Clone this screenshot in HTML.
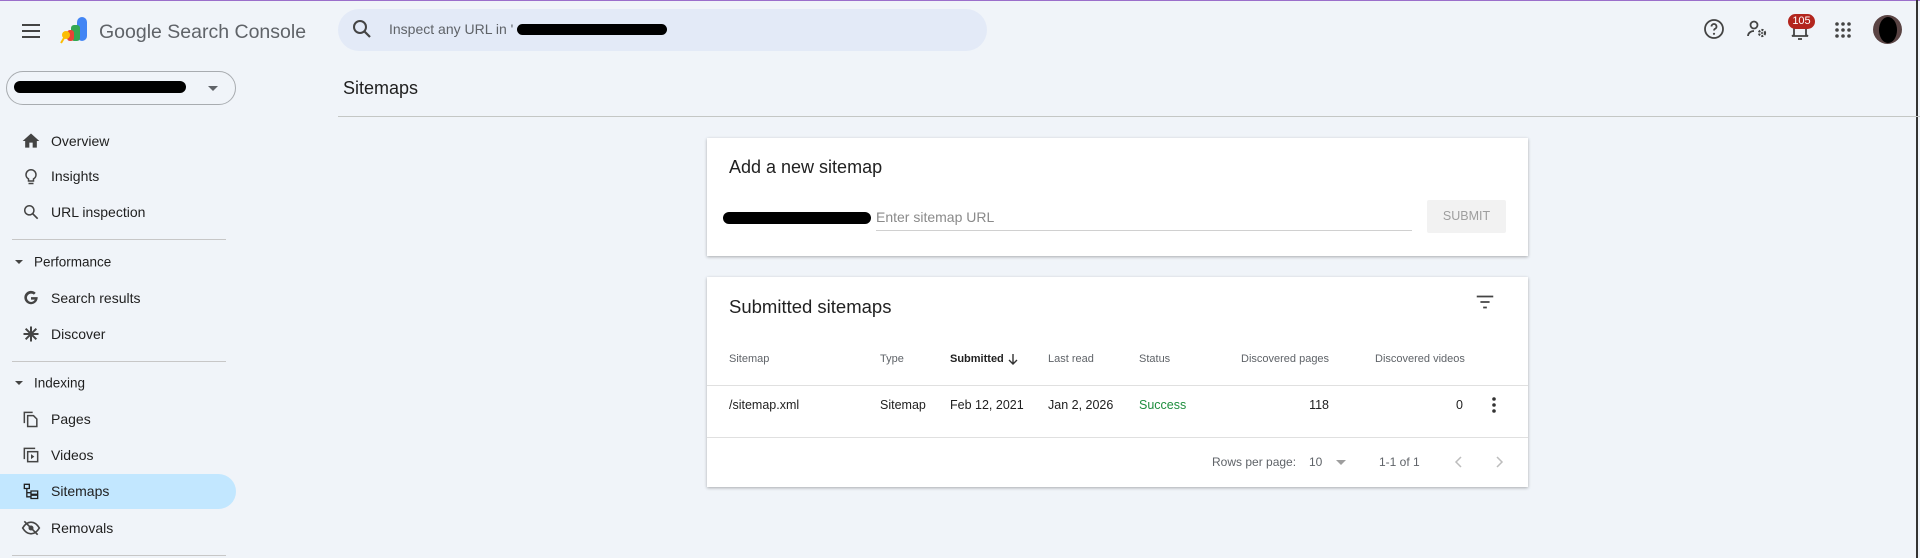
<!DOCTYPE html>
<html><head><meta charset="utf-8"><style>
*{box-sizing:border-box;margin:0;padding:0}
body{width:1920px;height:558px;overflow:hidden;background:#f0f4f9;font-family:"Liberation Sans",Arial,sans-serif;color:#1f1f1f;position:relative}
.a{position:absolute}
.nav{position:absolute;left:51px;font-size:14px;color:#1f1f1f;transform:translateY(-50%)}
.ic{position:absolute;left:21px;width:20px;height:20px;transform:translateY(-50%)}
.div{position:absolute;left:12px;width:214px;height:1px;background:#c7c7c7}
.card{position:absolute;left:707px;width:821px;background:#fff;box-shadow:0 1px 3px rgba(0,0,0,.3)}
.th{position:absolute;top:359px;font-size:11px;color:#5f6368;transform:translateY(-50%)}
.td{position:absolute;top:405px;font-size:12.5px;color:#212121;transform:translateY(-50%)}
</style></head><body>
<div class="a" style="left:0;top:0;width:1920px;height:1px;background:#9b6fcb"></div>
<div class="a" style="left:1916px;top:0;width:2px;height:558px;background:#333"></div>
<!-- header -->
<svg class="a" style="left:19px;top:19px" width="24" height="24" viewBox="0 0 24 24"><path d="M3 6h18M3 12h18M3 18h18" stroke="#444" stroke-width="2"/></svg>
<svg class="a" style="left:60px;top:16px" width="30" height="28" viewBox="0 0 30 28"><rect x="17" y="1" width="10" height="24" rx="5" fill="#4285f4"/><rect x="11" y="9" width="9" height="16" rx="3" fill="#34a853"/><rect x="7" y="14" width="7" height="11" rx="3" fill="#ea4335"/><circle cx="6" cy="19" r="4" fill="#fbbc04"/><path d="M4 22l-3 5" stroke="#fbbc04" stroke-width="2"/></svg>
<div class="a" style="left:99px;top:21px;font-size:19.5px;color:#5f6368">Google Search Console</div>
<div class="a" style="left:338px;top:9px;width:649px;height:42px;border-radius:21px;background:#e3eaf7"></div>
<svg class="a" style="left:350px;top:17px" width="24" height="24" viewBox="0 0 24 24"><circle cx="10" cy="10" r="6" fill="none" stroke="#444" stroke-width="2"/><path d="M14.5 14.5l5.5 5.5" stroke="#444" stroke-width="2.2"/></svg>
<div class="a" style="left:389px;top:21px;font-size:14px;color:#5f6368">Inspect any URL in '</div>
<div class="a" style="left:517px;top:24px;width:150px;height:11px;background:#000;border-radius:6px"></div>
<svg class="a" style="left:1702px;top:17px" width="24" height="24" viewBox="0 0 24 24"><circle cx="12" cy="12" r="9" fill="none" stroke="#444" stroke-width="1.8"/><path d="M9.5 9.5a2.5 2.5 0 1 1 3.5 2.3c-.7.4-1 .9-1 1.7" fill="none" stroke="#444" stroke-width="1.8"/><circle cx="12" cy="16.8" r="1.1" fill="#444"/></svg>
<svg class="a" style="left:1745px;top:17px" width="24" height="24" viewBox="0 0 24 24"><circle cx="9" cy="8" r="3.5" fill="none" stroke="#444" stroke-width="1.8"/><path d="M3 19c0-3 3-5 6-5" fill="none" stroke="#444" stroke-width="1.8"/><circle cx="17" cy="16" r="3" fill="none" stroke="#444" stroke-width="2.2" stroke-dasharray="2 1.3"/><circle cx="17" cy="16" r="1" fill="#444"/></svg>
<svg class="a" style="left:1788px;top:18px" width="24" height="24" viewBox="0 0 24 24"><path d="M6 17v-6a6 6 0 0 1 12 0v6l2 1H4z" fill="none" stroke="#444" stroke-width="1.8"/><path d="M10 21h4" stroke="#444" stroke-width="1.8"/></svg>
<div class="a" style="left:1788px;top:14px;width:27px;height:15px;border-radius:8px;background:#b3261e;color:#fff;font-size:11px;text-align:center;line-height:15px">105</div>
<svg class="a" style="left:1831px;top:18px" width="24" height="24" viewBox="0 0 24 24" fill="#444"><circle cx="6" cy="6" r="1.8"/><circle cx="12" cy="6" r="1.8"/><circle cx="18" cy="6" r="1.8"/><circle cx="6" cy="12" r="1.8"/><circle cx="12" cy="12" r="1.8"/><circle cx="18" cy="12" r="1.8"/><circle cx="6" cy="18" r="1.8"/><circle cx="12" cy="18" r="1.8"/><circle cx="18" cy="18" r="1.8"/></svg>
<div class="a" style="left:1873px;top:15px;width:29px;height:29px;border-radius:50%;background:#5a4444"></div>
<div class="a" style="left:1879px;top:17px;width:18px;height:26px;border-radius:50%;background:#000"></div>
<!-- sidebar -->
<div class="a" style="left:6px;top:71px;width:230px;height:34px;border:1px solid #a8acb0;border-radius:17px"></div>
<div class="a" style="left:14px;top:81px;width:172px;height:12px;background:#000;border-radius:6px"></div>
<div class="a" style="left:208px;top:86px;border:5px solid transparent;border-top-color:#5f6368"></div>
<svg class="ic" style="top:141px" viewBox="0 0 24 24"><path d="M10 20v-6h4v6h5v-8h3L12 3 2 12h3v8z" fill="#444"/></svg>
<div class="nav" style="top:141px">Overview</div>
<svg class="ic" style="top:176px" viewBox="0 0 24 24"><path d="M9 21h6M9 18h6v-2.5c2-1.2 3-3 3-5a6 6 0 0 0-12 0c0 2 1 3.8 3 5z" fill="none" stroke="#444" stroke-width="1.8"/></svg>
<div class="nav" style="top:176px">Insights</div>
<svg class="ic" style="top:212px" viewBox="0 0 24 24"><circle cx="10" cy="10" r="5.5" fill="none" stroke="#444" stroke-width="1.8"/><path d="M14 14l6 6" stroke="#444" stroke-width="2"/></svg>
<div class="nav" style="top:212px">URL inspection</div>
<div class="div" style="top:239px"></div>
<div class="a" style="left:15px;top:260px;border:4px solid transparent;border-top-color:#444"></div>
<div class="nav" style="top:262px;left:34px;font-size:13.5px">Performance</div>
<svg class="ic" style="top:298px" viewBox="0 0 24 24"><path d="M20 11h-8v3h4.6A5 5 0 1 1 15.5 8l2.2-2.2A8 8 0 1 0 20 12z" fill="#444"/></svg>
<div class="nav" style="top:298px">Search results</div>
<svg class="ic" style="top:334px" viewBox="0 0 24 24"><path d="M12 3v18M3 12h18M5.6 5.6l12.8 12.8M18.4 5.6L5.6 18.4" stroke="#444" stroke-width="2.4"/></svg>
<div class="nav" style="top:334px">Discover</div>
<div class="div" style="top:361px"></div>
<div class="a" style="left:15px;top:381px;border:4px solid transparent;border-top-color:#444"></div>
<div class="nav" style="top:383px;left:34px;font-size:13.5px">Indexing</div>
<svg class="ic" style="top:419px" viewBox="0 0 24 24"><path d="M4 17V4h10" fill="none" stroke="#444" stroke-width="1.8"/><path d="M8 8h7l4 4v9H8z" fill="none" stroke="#444" stroke-width="1.8"/></svg>
<div class="nav" style="top:419px">Pages</div>
<svg class="ic" style="top:455px" viewBox="0 0 24 24"><path d="M4 17V4h13" fill="none" stroke="#444" stroke-width="1.8"/><rect x="8" y="8" width="12" height="12" fill="none" stroke="#444" stroke-width="1.8"/><path d="M12 11v6l4-3z" fill="#444"/></svg>
<div class="nav" style="top:455px">Videos</div>
<div class="a" style="left:0;top:474px;width:236px;height:35px;background:#c2e7ff;border-radius:0 18px 18px 0"></div>
<svg class="ic" style="top:491px" viewBox="0 0 24 24"><path d="M4 4h6v5H4zM12 12h8v4h-8zM12 17h8v4h-8zM7 9v10h5M7 14h5" fill="none" stroke="#222" stroke-width="1.6"/></svg>
<div class="nav" style="top:491px">Sitemaps</div>
<svg class="ic" style="top:528px" viewBox="0 0 24 24"><path d="M2 12c3-5 7-7 10-7s7 2 10 7c-3 5-7 7-10 7s-7-2-10-7z" fill="none" stroke="#444" stroke-width="2"/><circle cx="12" cy="12" r="3" fill="#444"/><path d="M4 4l16 16" stroke="#444" stroke-width="2"/></svg>
<div class="nav" style="top:528px">Removals</div>
<div class="div" style="top:555px"></div>
<!-- main -->
<div class="a" style="left:343px;top:78px;font-size:18px;color:#1f1f1f">Sitemaps</div>
<div class="a" style="left:338px;top:116px;width:1582px;height:1px;background:#c4c7c5"></div>
<div class="card" style="top:138px;height:118px">
 <div class="a" style="left:22px;top:19px;font-size:18px;color:#212121">Add a new sitemap</div>
 <div class="a" style="left:16px;top:74px;width:148px;height:12px;background:#000;border-radius:6px"></div>
 <div class="a" style="left:169px;top:71px;font-size:14px;color:#8a8a8a">Enter sitemap URL</div>
 <div class="a" style="left:169px;top:92px;width:536px;height:1px;background:#d0d0d0"></div>
 <div class="a" style="left:720px;top:62px;width:79px;height:33px;background:#f2f2f2;border-radius:2px;font-size:12.5px;color:#9e9e9e;text-align:center;line-height:33px">SUBMIT</div>
</div>
<div class="card" style="top:277px;height:210px"></div>
<div class="a" style="left:729px;top:296px;font-size:18.5px;color:#212121">Submitted sitemaps</div>
<svg class="a" style="left:1474px;top:291px" width="22" height="22" viewBox="0 0 24 24"><path d="M3 6h18M7 12h10M10 18h4" stroke="#444" stroke-width="2"/></svg>
<div class="th" style="left:729px">Sitemap</div>
<div class="th" style="left:880px">Type</div>
<div class="th" style="left:950px;color:#212121;font-weight:bold">Submitted</div>
<svg class="a" style="left:1006px;top:352px" width="14" height="14" viewBox="0 0 14 14"><path d="M7 2v10M3 8l4 4 4-4" fill="none" stroke="#333" stroke-width="1.4"/></svg>
<div class="th" style="left:1048px">Last read</div>
<div class="th" style="left:1139px">Status</div>
<div class="th" style="left:1241px">Discovered pages</div>
<div class="th" style="left:1375px">Discovered videos</div>
<div class="a" style="left:707px;top:385px;width:821px;height:1px;background:#e0e0e0"></div>
<div class="td" style="left:729px">/sitemap.xml</div>
<div class="td" style="left:880px">Sitemap</div>
<div class="td" style="left:950px">Feb 12, 2021</div>
<div class="td" style="left:1048px">Jan 2, 2026</div>
<div class="td" style="left:1139px;color:#1e8e3e">Success</div>
<div class="td" style="left:1279px;width:50px;text-align:right">118</div>
<div class="td" style="left:1413px;width:50px;text-align:right">0</div>
<svg class="a" style="left:1484px;top:395px" width="20" height="20" viewBox="0 0 20 20" fill="#333"><circle cx="10" cy="4" r="1.8"/><circle cx="10" cy="10" r="1.8"/><circle cx="10" cy="16" r="1.8"/></svg>
<div class="a" style="left:707px;top:437px;width:821px;height:1px;background:#e0e0e0"></div>
<div class="td" style="top:462px;left:1212px;font-size:12px;color:#5f6368">Rows per page:</div>
<div class="td" style="top:462px;left:1309px;font-size:12px;color:#5f6368">10</div>
<div class="a" style="left:1336px;top:460px;border:5px solid transparent;border-top-color:#9e9e9e"></div>
<div class="td" style="top:462px;left:1379px;font-size:12px;color:#5f6368">1-1 of 1</div>
<svg class="a" style="left:1451px;top:454px" width="16" height="16" viewBox="0 0 16 16"><path d="M10 3L5 8l5 5" fill="none" stroke="#bdbdbd" stroke-width="1.5"/></svg>
<svg class="a" style="left:1491px;top:454px" width="16" height="16" viewBox="0 0 16 16"><path d="M6 3l5 5-5 5" fill="none" stroke="#bdbdbd" stroke-width="1.5"/></svg>
</body></html>
